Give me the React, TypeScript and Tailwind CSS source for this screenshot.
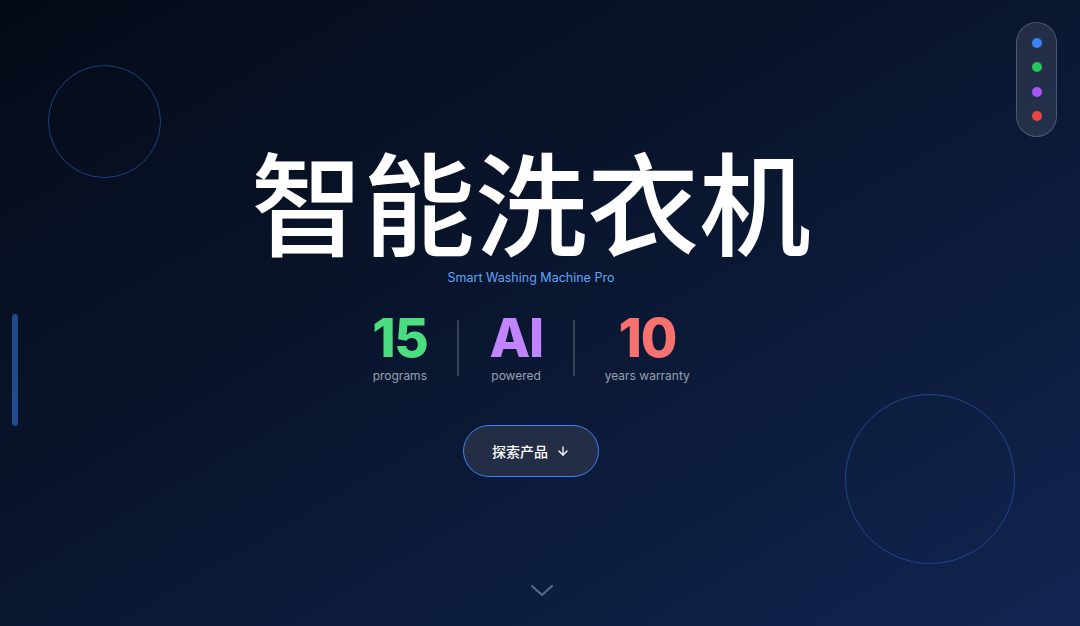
import { ArrowDown } from 'lucide-react';

const stats = [
  { value: '15', label: 'programs', color: 'text-[#4ade80]' },
  { value: 'AI', label: 'powered', color: 'text-[#c084fc]' },
  { value: '10', label: 'years warranty', color: 'text-[#f87171]' },
];

const StatBlock = ({ value, label, color }: { value: string; label: string; color: string }) => (
  <div className="flex flex-col items-center">
    <span className={`text-[53px] leading-none font-extrabold tracking-[-0.025em] ${color}`}>{value}</span>
    <span className="mt-[3px] text-xs text-gray-400">{label}</span>
  </div>
);

export default function App() {
  return (
    <div
      className="relative h-[626px] w-full overflow-hidden bg-gradient-to-br from-[#050a17] via-[#0a1731] to-[#112551]"
      style={{ fontFamily: 'Inter, "Noto Sans CJK SC", sans-serif' }}
    >
      {/* decorative rings */}
      <div className="absolute left-[48px] top-[65px] h-[113px] w-[113px] rounded-full border-[1.5px] border-[#1e4082]" />
      <div className="absolute right-[65px] top-[394px] h-[170px] w-[170px] rounded-full border-[1.5px] border-[#21468a]" />

      {/* left progress bar */}
      <div className="absolute left-[12px] top-[314px] h-[112px] w-[6px] rounded-full bg-[#1f4b91]" />

      {/* colour switcher */}
      <div className="absolute right-[23px] top-[22px] flex h-[115px] w-[41px] flex-col items-center justify-center gap-[14.5px] rounded-full border border-white/20 bg-white/10">
        <span className="h-[10px] w-[10px] rounded-full bg-[#3b82f6]" />
        <span className="h-[10px] w-[10px] rounded-full bg-[#22c55e]" />
        <span className="h-[10px] w-[10px] rounded-full bg-[#a855f7]" />
        <span className="h-[10px] w-[10px] rounded-full bg-[#ef4444]" />
      </div>

      <div className="flex h-full flex-col items-center justify-center pb-[9px] pr-[18px]">
        <h1
          className="text-[112px] font-medium leading-[118px] text-white"
          style={{ fontFamily: '"Noto Sans CJK SC", sans-serif' }}
        >
          智能洗衣机
        </h1>
        <p className="mt-[12px] text-[12.5px] leading-4 text-[#60a5fa]">Smart Washing Machine Pro</p>

        <div className="mt-[26px] flex items-center gap-[30px]">
          <StatBlock {...stats[0]} />
          <div className="h-[56px] w-[2px] rounded-full bg-[#3a4459]" />
          <StatBlock {...stats[1]} />
          <div className="h-[56px] w-[2px] rounded-full bg-[#3a4459]" />
          <StatBlock {...stats[2]} />
        </div>

        <button
          type="button"
          className="mt-[41px] flex h-[52px] items-center gap-2 rounded-full border border-[#3b82f6] bg-[#232d45] px-[28px] text-[14px] font-medium text-white"
          style={{ fontFamily: '"Noto Sans CJK SC", sans-serif' }}
        >
          探索产品
          <ArrowDown className="h-[14px] w-[14px]" strokeWidth={2.25} />
        </button>
      </div>

      {/* scroll hint */}
      <svg
        className="absolute bottom-[29px] left-[531px]"
        width="22"
        height="12"
        viewBox="0 0 22 12"
        fill="none"
      >
        <polyline points="1,1 11,10 21,1" stroke="#5b6b8c" strokeWidth="2" strokeLinecap="round" strokeLinejoin="round" />
      </svg>
    </div>
  );
}
